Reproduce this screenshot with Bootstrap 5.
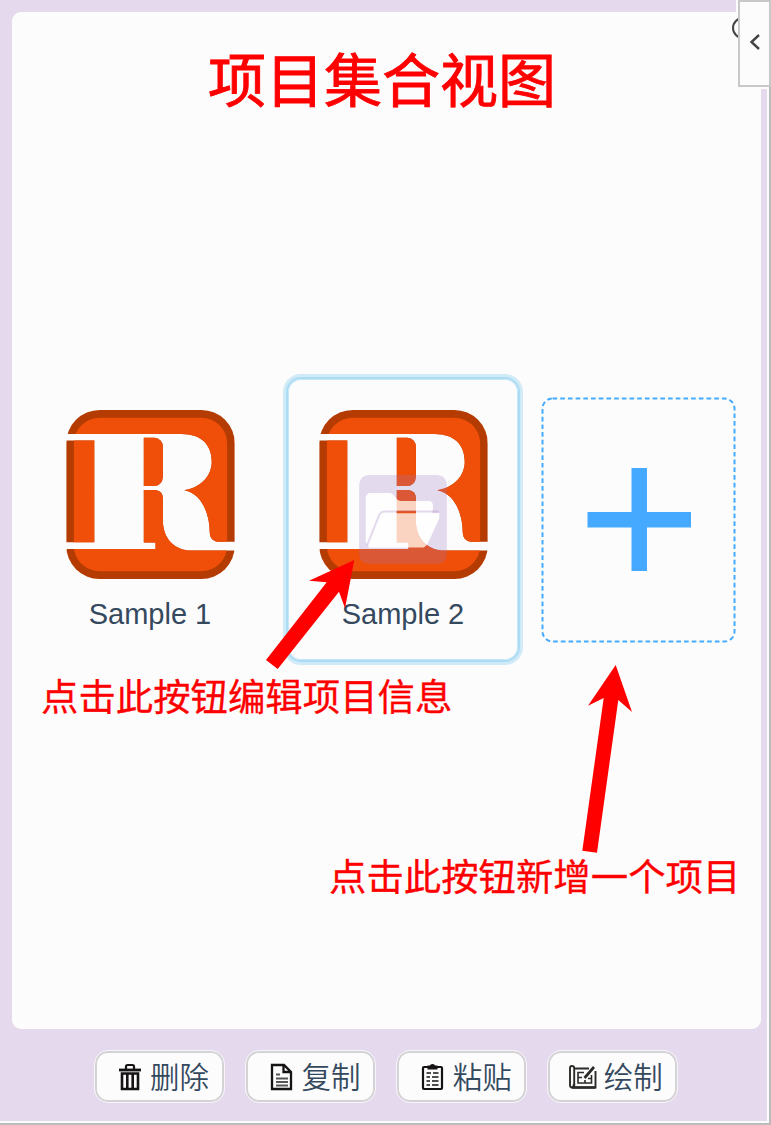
<!DOCTYPE html>
<html lang="zh-CN">
<head>
<meta charset="utf-8">
<meta name="viewport" content="width=device-width, initial-scale=1">
<title>项目集合视图</title>
<link href="https://cdn.jsdelivr.net/npm/bootstrap@5.3.0/dist/css/bootstrap.min.css" rel="stylesheet">
<style>
  body { background: #fcfcfc; font-family: "Liberation Sans", "Noto Sans CJK SC", sans-serif; color: #34495e; }
  .app-shell { width: 771px; height: 1125px; padding: 12px 6px 0 12px; background: #e5daed; border-right: 2px solid #bbb; border-bottom: 2px solid #bbb; box-shadow: inset -2px -2px 0 #fcfcfc; }
  .board { width: 749px; height: 1017px; padding: 0 25px 2px 23px; gap: 23px; background: #fcfcfc; border-radius: 9px; }
  .project { width: 230px; height: 281px; padding-top: 31px; border-radius: 12px; }
  .project.active { border-radius: 13px; box-shadow: inset 0 0 0 1px #c5e6f6, 0 0 0 2px #abdcf3, 0 0 0 5px #d0ebf7; }
  .project-name { font-size: 29px; line-height: 34px; margin-top: 18px; }
  .edit-btn { left: 71px; top: 96px; }
  .add-project { width: 195px; height: 246px; }
  .toolbar { height: 95px; padding: 0 0 0 83px; gap: 22.5px; }
  .tool { width: 129px; height: 51px; padding: 0 0 0 9px; gap: 9px; background: #fcfcfc; border: 2px solid #d3d2d5; border-radius: 13px; outline: 1px solid #f8f5fa; font-size: 29.5px; line-height: 42px; font-weight: 350; color: #34495e; font-family: "Noto Sans CJK SC", sans-serif; }
  .tool + .tool { margin-left: -.4px; }
  .tool-draw { gap: 7px; padding-right: 3px; }
  .tool span { padding-bottom: 4px; }
  .note { color: #f00; white-space: nowrap; line-height: 1; font-family: "Noto Sans CJK SC", sans-serif; -webkit-text-stroke: .3px #f00; }
  .note-title { left: 208px; top: 48px; font-size: 58px; -webkit-text-stroke-width: .9px; }
  .note-edit { left: 41px; top: 677px; font-size: 37.4px; }
  .note-add { left: 329px; top: 857px; font-size: 37.4px; }
  .arrow-edit { left: 265px; top: 559px; }
  .arrow-add { left: 582px; top: 664px; }
  .drawer { left: 738px; top: 0; width: 33px; height: 87px; padding: 0 0 3px; background: #fcfcfc; border: 2px solid #c8c8c8; border-radius: 0; }
  .drawer-edge { left: 736px; top: 0; width: 33px; height: 89px; background: #fcfcfc; }
  .help-ring { left: 732px; top: 17px; width: 22px; height: 22px; border: 2px solid #444; border-radius: 50%; }
</style>
</head>
<body>
<svg class="position-absolute" width="0" height="0" aria-hidden="true">
  <defs>
    <clipPath id="logoCuts">
      <path d="M0 0H504V394H452Q429 388 429 366C429 310 405 250 353 240C405 232 435 195 435 155C435 105 405 72 345 72H0ZM0 91H84V395H0ZM232 83H264Q289 86 289 112V200Q287 225 264 227H232ZM232 239H267Q289 242 289 264V330C289 385 325 420 375 420H504V505H0V415H267V396H232Z"/>
    </clipPath>
    <symbol id="logo" viewBox="0 0 504 505">
      <g clip-path="url(#logoCuts)">
        <rect width="504" height="505" rx="100" fill="#b43b02"/>
        <rect x="23" y="23" width="458" height="459" rx="77" fill="#f04f09"/>
      </g>
    </symbol>
  </defs>
</svg>

<div class="app-shell position-relative overflow-hidden">
  <main class="board d-flex align-items-center">
    <div class="project text-center">
      <svg class="d-block mx-auto" width="169" height="169"><use href="#logo"/></svg>
      <div class="project-name">Sample 1</div>
    </div>
    <div class="project active text-center position-relative">
      <svg class="d-block mx-auto" width="169" height="169"><use href="#logo"/></svg>
      <svg class="edit-btn position-absolute" width="88" height="89" viewBox="0 0 264 268">
        <path fill="#9c74c4" fill-opacity=".25" fill-rule="evenodd" d="M34 0H230Q264 0 264 34V234Q264 268 230 268H34Q0 268 0 234V34Q0 0 34 0ZM34 54Q20 56 20 70V200L30 218H194Q204 214 209 200L241 130V115H218Q222 110 222 104V92Q221 78 209 78H126C106 76 110 54 88 54Z"/>
        <path fill="#fff" fill-opacity=".75" d="M34 54Q20 56 20 70V200L24 209L60 121Q64 109 74 108H218Q222 104 222 92Q221 78 209 78H126C106 76 110 54 88 54ZM80 115Q70 115 67 124L30 218H194Q204 214 209 200L241 130V115Z"/>
        <path d="M24 211L60 121Q65 110 76 110H240" fill="none" stroke="#9c74c4" stroke-opacity=".25" stroke-width="6"/>
      </svg>
      <div class="project-name">Sample 2</div>
    </div>
    <svg class="add-project" viewBox="0 0 195 246">
      <rect x="1.5" y="1.5" width="192" height="243" rx="10" fill="none" stroke="#45aaff" stroke-width="2" stroke-dasharray="4.7 3"/>
      <path d="M90.500 71H106V115H150V130.500H106V174H90.500V130.500H46.500V115H90.500Z" fill="#45aaff"/>
    </svg>
  </main>

  <div class="toolbar d-flex align-items-center">
    <button class="tool btn d-flex align-items-center justify-content-center">
      <svg width="22" height="28" viewBox="0 0 22 28" fill="none" stroke="#161314" stroke-width="2.200"><path d="M0 7H22" stroke-width="2.800"/><path d="M7 6V3.500Q7 2 8.500 2H13.500Q15 2 15 3.500V6"/><path d="M3 10.500H19V26H3ZM8.300 10V26M13.700 10V26" stroke-width="2.600"/></svg>
      <span>删除</span>
    </button>
    <button class="tool btn d-flex align-items-center justify-content-center">
      <svg width="23" height="28" viewBox="0 0 23 28" fill="none" stroke="#161314" stroke-width="2.300"><path d="M2 2H14L21 9V26H2ZM13.500 2V9H21"/><path d="M6 11.500H10M6 15.500H18M6 19H18M6 22.500H18" stroke="#555" stroke-width="1.800"/></svg>
      <span>复制</span>
    </button>
    <button class="tool btn d-flex align-items-center justify-content-center">
      <svg width="23" height="28" viewBox="0 0 23 28" fill="none" stroke="#161314" stroke-width="2.200"><rect x="2" y="4" width="19" height="22" rx="1"/><path d="M6.500 2.500H9Q9 1 11.500 1T14 2.500H16.500V6.500H6.500Z" fill="#161314" stroke="none"/><path d="M5.500 10H10M12 10H17.500M5.500 14H9M11 14H17.500M5.500 18H9M11 18H17.500M5.500 22H9M11 22H17.500" stroke-width="1.500"/></svg>
      <span>粘贴</span>
    </button>
    <button class="tool tool-draw btn d-flex align-items-center justify-content-center">
      <svg width="28" height="28" viewBox="0 0 28 28" fill="none" stroke="#2a2a28" stroke-width="1.900"><path d="M5 5.500H20M26.500 8V24.500H3Q1 24.500 1 22V5Q1 3 3 3T5.200 5V21"/><path d="M5.200 21Q5 24 3 24.500H26.500" stroke-width="2.400"/><path d="M15.500 15L25 4" stroke-width="2.700"/><path d="M15 9.500H9V20H22.500V12M9 14.500H13M16 20V17M19 15.500H22.500" stroke-width="1.600"/></svg>
      <span>绘制</span>
    </button>
  </div>
</div>

<div class="drawer-edge position-absolute"></div>
<div class="help-ring position-absolute"></div>
<button class="drawer btn position-absolute d-flex align-items-center justify-content-center" aria-label="展开">
  <svg width="12" height="18" viewBox="0 0 12 18"><path d="M10 2L2.500 9L10 16" fill="none" stroke="#444" stroke-width="2.400"/></svg>
</button>

<div class="note note-title position-absolute">项目集合视图</div>
<div class="note note-edit position-absolute">点击此按钮编辑项目信息</div>
<div class="note note-add position-absolute">点击此按钮新增一个项目</div>
<svg class="arrow-edit position-absolute" width="91" height="112"><path d="M89.300 1L44 21.700L61.700 23.300L1 101L12.700 110L74 32.700L80 49.300Z" fill="red"/></svg>
<svg class="arrow-add position-absolute" width="51" height="190"><path d="M33.700 1L6 41.700L21.700 34L.3 186.700L15 188.700L36.300 36L50 48Z" fill="red"/></svg>
<script src="https://cdn.jsdelivr.net/npm/bootstrap@5.3.0/dist/js/bootstrap.bundle.min.js"></script>
</body>
</html>
